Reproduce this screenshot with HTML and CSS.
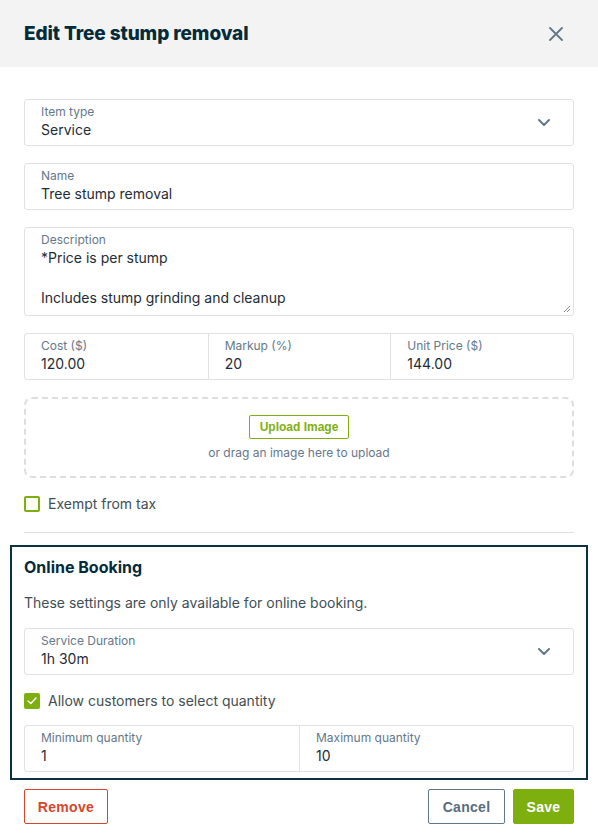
FILE: index.html
```html
<!DOCTYPE html>
<html>
<head>
<meta charset="utf-8">
<link rel="stylesheet" href="styles.css">
</head>
<body>
<div class="dialog">
  <div class="header">
    <h1 class="title">Edit Tree stump removal</h1>
    <svg class="close" width="14" height="14" viewBox="0 0 14 14"><path d="M1 1L13 13M13 1L1 13" stroke="#65788a" stroke-width="1.8" stroke-linecap="round"/></svg>
  </div>
  <div class="content">
    <div class="field select">
      <div class="field-body">
        <div class="label">Item type</div>
        <div class="value">Service</div>
      </div>
      <svg class="chevron" width="12" height="7" viewBox="0 0 12 7"><path d="M1 1L6 6L11 1" fill="none" stroke="#65788a" stroke-width="2" stroke-linecap="round" stroke-linejoin="round"/></svg>
    </div>
    <div class="field">
      <div class="field-body">
        <div class="label">Name</div>
        <div class="value">Tree stump removal</div>
      </div>
    </div>
    <div class="field area">
      <div class="field-body">
        <div class="label">Description</div>
        <div class="value">*Price is per stump</div>
        <div class="value">&nbsp;</div>
        <div class="value">Includes stump grinding and cleanup</div>
      </div>
      <svg class="grip" width="8" height="8" viewBox="0 0 8 8"><path d="M1 7L7 1M4 7L7 4" stroke="#888" stroke-width="1"/></svg>
    </div>
    <div class="field-row three">
      <div class="cell">
        <div class="label">Cost ($)</div>
        <div class="value">120.00</div>
      </div>
      <div class="cell">
        <div class="label">Markup (%)</div>
        <div class="value">20</div>
      </div>
      <div class="cell">
        <div class="label">Unit Price ($)</div>
        <div class="value">144.00</div>
      </div>
    </div>
    <div class="dropzone">
      <button class="upload-btn">Upload Image</button>
      <div class="drop-hint">or drag an image here to upload</div>
    </div>
    <label class="check-row tax">
      <span class="checkbox"></span>
      <span class="check-label">Exempt from tax</span>
    </label>
    <div class="divider"></div>
    <div class="booking">
      <h2 class="booking-title">Online Booking</h2>
      <p class="booking-text">These settings are only available for online booking.</p>
      <div class="field select">
        <div class="field-body">
          <div class="label">Service Duration</div>
          <div class="value">1h 30m</div>
        </div>
        <svg class="chevron" width="12" height="7" viewBox="0 0 12 7"><path d="M1 1L6 6L11 1" fill="none" stroke="#65788a" stroke-width="2" stroke-linecap="round" stroke-linejoin="round"/></svg>
      </div>
      <label class="check-row qty">
        <span class="checkbox checked"><svg width="10" height="8" viewBox="0 0 10 8"><path d="M1 4L3.8 6.5L9 1" fill="none" stroke="#fff" stroke-width="1.4" stroke-linecap="round" stroke-linejoin="round"/></svg></span>
        <span class="check-label">Allow customers to select quantity</span>
      </label>
      <div class="field-row two">
        <div class="cell">
          <div class="label">Minimum quantity</div>
          <div class="value">1</div>
        </div>
        <div class="cell">
          <div class="label">Maximum quantity</div>
          <div class="value">10</div>
        </div>
      </div>
    </div>
    <div class="actions">
      <button class="btn btn-remove">Remove</button>
      <div class="actions-right">
        <button class="btn btn-cancel">Cancel</button>
        <button class="btn btn-save">Save</button>
      </div>
    </div>
  </div>
</div>
</body>
</html>
```

FILE: styles.css
```css
* { box-sizing: border-box; }
html, body { margin: 0; padding: 0; background: #fff; }
body {
  font-family: Inter, "Noto Sans", sans-serif;
  color: #1d2c36;
  width: 598px;
  height: 840px;
  overflow: hidden;
}
.header {
  height: 67px;
  background: #f3f3f3;
  display: flex;
  align-items: center;
  justify-content: space-between;
  padding: 0 35px 0 24px;
}
.title {
  margin: 0;
  font-size: 19px;
  font-weight: 800;
  color: #032b3a;
  letter-spacing: -0.1px;
}
.close { display: block; }
.content {
  padding: 32px 24px 0;
}
.field {
  border: 1px solid #e1e1e1;
  border-radius: 3px;
  display: flex;
  align-items: center;
  position: relative;
  margin-bottom: 17px;
}
.field-body {
  flex: 1;
  padding: 4px 16px 5px;
}
.area .field-body { padding-bottom: 7px; }
.label {
  font-size: 12px;
  line-height: 16px;
  color: #65788a;
}
.value {
  font-size: 14px;
  line-height: 20px;
  color: #1d2c36;
}
.chevron { margin-right: 23px; display: block; }
.grip { position: absolute; right: 2px; bottom: 2px; }
.field-row {
  display: grid;
  border: 1px solid #e1e1e1;
  border-radius: 3px;
  margin-bottom: 17px;
}
.field-row.three { grid-template-columns: 1fr 1fr 1fr; }
.field-row.two { grid-template-columns: 1fr 1fr; margin-bottom: 0; }
.cell {
  padding: 4px 16px 5px;
}
.cell + .cell { border-left: 1px solid #e1e1e1; }
.dropzone {
  border: 2px dashed #dedede;
  border-radius: 8px;
  padding: 16px 0 15px;
  display: flex;
  flex-direction: column;
  align-items: center;
}
.upload-btn {
  height: 24px;
  width: 100px;
  border: 1px solid #7db00e;
  border-radius: 2px;
  background: #fff;
  color: #7db00e;
  font-family: "Liberation Sans", Arial, sans-serif;
  font-weight: 700;
  font-size: 12px;
  padding: 0;
}
.drop-hint {
  margin-top: 6px;
  font-size: 12px;
  line-height: 16px;
  color: #65788a;
}
.check-row {
  display: flex;
  align-items: center;
  gap: 8px;
  height: 16px;
}
.tax { margin-top: 18px; }
.checkbox {
  width: 16px;
  height: 16px;
  border: 2px solid #7db00e;
  border-radius: 2px;
  display: flex;
  align-items: center;
  justify-content: center;
  flex: none;
}
.checkbox.checked { background: #7db00e; }
.check-label {
  font-size: 14px;
  line-height: 16px;
  color: #424e56;
}
.divider {
  margin-top: 20px;
  border-top: 1px solid #e1e1e1;
}
.booking {
  margin: 12px -14px 0;
  border: 2px solid #0b3142;
  padding: 10px 12px 6px;
}
.booking-title {
  margin: 0;
  font-size: 16px;
  line-height: 20px;
  font-weight: 700;
  color: #032b3a;
}
.booking-text {
  margin: 16px 0 15px;
  font-size: 14px;
  line-height: 20px;
  color: #424e56;
}
.booking .field { margin-bottom: 18px; }
.qty { margin-bottom: 16px; }
.actions {
  display: flex;
  justify-content: space-between;
  margin-top: 9px;
}
.actions-right { display: flex; gap: 8px; }
.btn {
  height: 35px;
  border-radius: 2px;
  font-family: "Liberation Sans", Arial, sans-serif;
  font-weight: 700;
  font-size: 14px;
  letter-spacing: 0.3px;
  background: #fff;
  padding: 0;
}
.btn-remove { width: 84px; border: 1px solid #d5462b; color: #d5462b; }
.btn-cancel { width: 77px; border: 1px solid #60788a; color: #586d7c; }
.btn-save { width: 61px; border: 1px solid #7db00e; background: #7db00e; color: #fff; }
```
